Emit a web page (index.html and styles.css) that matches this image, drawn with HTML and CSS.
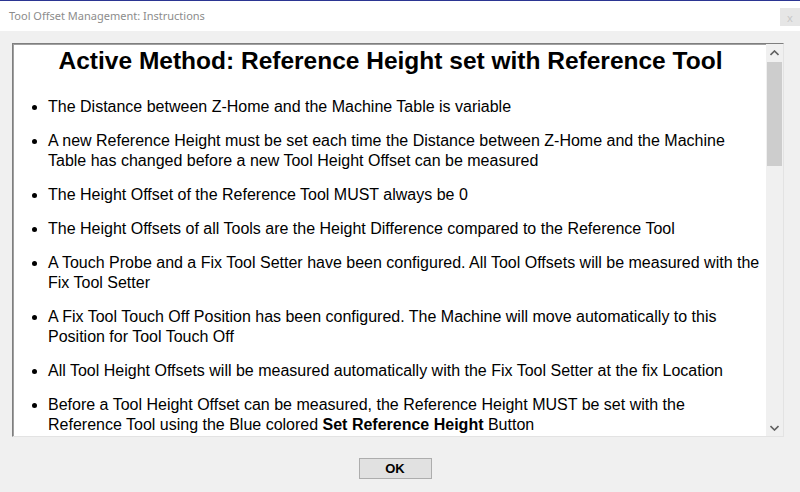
FILE: index.html
```html
<!DOCTYPE html>
<html>
<head>
<meta charset="utf-8">
<link rel="stylesheet" href="styles.css">
</head>
<body>
<div class="window">
  <div class="titlebar">
    <span class="title">Tool Offset Management: Instructions</span>
    <span class="close">x</span>
  </div>
  <div class="client">
    <div class="panel">
      <div class="content">
        <h1 class="heading">Active Method: Reference Height set with Reference Tool</h1>
        <ul class="list">
          <li>The Distance between Z-Home and the Machine Table is variable</li>
          <li>A new Reference Height must be set each time the Distance between Z-Home and the Machine<br>Table has changed before a new Tool Height Offset can be measured</li>
          <li>The Height Offset of the Reference Tool MUST always be 0</li>
          <li>The Height Offsets of all Tools are the Height Difference compared to the Reference Tool</li>
          <li>A Touch Probe and a Fix Tool Setter have been configured. All Tool Offsets will be measured with the<br>Fix Tool Setter</li>
          <li>A Fix Tool Touch Off Position has been configured. The Machine will move automatically to this<br>Position for Tool Touch Off</li>
          <li>All Tool Height Offsets will be measured automatically with the Fix Tool Setter at the fix Location</li>
          <li>Before a Tool Height Offset can be measured, the Reference Height MUST be set with the<br>Reference Tool using the Blue colored <b class="strong">Set Reference Height</b> Button</li>
        </ul>
      </div>
      <div class="scrollbar">
        <div class="arrow">
          <svg width="9" height="6" viewBox="0 0 9 6"><path d="M0.5 5 L4.5 1 L8.5 5" fill="none" stroke="#606060" stroke-width="1.6"/></svg>
        </div>
        <div class="track"><div class="thumb"></div></div>
        <div class="arrow">
          <svg width="9" height="6" viewBox="0 0 9 6"><path d="M0.5 1 L4.5 5 L8.5 1" fill="none" stroke="#606060" stroke-width="1.6"/></svg>
        </div>
      </div>
    </div>
    <div class="actions">
      <button class="ok">OK</button>
    </div>
  </div>
</div>
</body>
</html>
```

FILE: styles.css
```css
html, body {
  margin: 0;
  padding: 0;
}
body {
  width: 800px;
  height: 492px;
  overflow: hidden;
  background: #f0f0f0;
  font-family: "Liberation Sans", Arial, sans-serif;
}
.window {
  display: flex;
  flex-direction: column;
  height: 492px;
}
.titlebar {
  height: 30px;
  border-top: 1px solid #2b3592;
  background: #ffffff;
  display: flex;
  align-items: center;
  justify-content: space-between;
  padding-left: 9px;
}
.title {
  font-family: "Noto Sans", "Open Sans", sans-serif;
  font-size: 11px;
  color: #8c8c8c;
  margin-top: -1px;
}
.close {
  width: 20px;
  height: 18px;
  margin-top: 2px;
  background: #e6e6e6;
  color: #c8c8c8;
  font-family: "Noto Sans", sans-serif;
  font-size: 11px;
  display: flex;
  align-items: center;
  justify-content: center;
}
.client {
  flex: 1;
  display: flex;
  flex-direction: column;
  padding: 12px 16px 0 12px;
}
.panel {
  height: 392px;
  display: flex;
  border-top: 1px solid #7f7f7f;
  border-left: 1px solid #7f7f7f;
  border-right: 1px solid #e3e3e3;
  border-bottom: 1px solid #e3e3e3;
  background: #ffffff;
  box-shadow: inset 1px 1px 0 #a0a0a0;
}
.content {
  flex: 1;
  overflow: hidden;
  padding-top: 3px;
}
.heading {
  margin: 0;
  font-size: 24.5px;
  font-weight: bold;
  line-height: 28px;
  text-align: center;
  color: #000;
  padding-left: 2px;
}
.list {
  margin: 22px 0 0 0;
  padding: 0 0 0 35px;
  list-style: none;
}
.list li {
  position: relative;
  font-size: 16px;
  line-height: 20px;
  color: #000;
  margin-bottom: 14px;
  white-space: nowrap;
}
.list li::before {
  content: "";
  position: absolute;
  left: -16px;
  top: 8px;
  width: 5px;
  height: 5px;
  border-radius: 50%;
  background: #000;
}
.strong {
  font-weight: bold;
}
.scrollbar {
  width: 17px;
  background: #f0f0f0;
  display: flex;
  flex-direction: column;
}
.arrow {
  height: 17px;
  display: flex;
  align-items: center;
  justify-content: center;
}
.track {
  flex: 1;
  padding: 1px 1px 0 1px;
}
.thumb {
  height: 104px;
  background: #cdcdcd;
}
.actions {
  display: flex;
  justify-content: center;
  padding-top: 21px;
  padding-right: 6px;
}
.ok {
  width: 73px;
  height: 21px;
  background: #e1e1e1;
  border: 1px solid #adadad;
  font-family: "Liberation Sans", Arial, sans-serif;
  font-weight: bold;
  font-size: 13px;
  color: #000;
  padding: 0;
}
```
